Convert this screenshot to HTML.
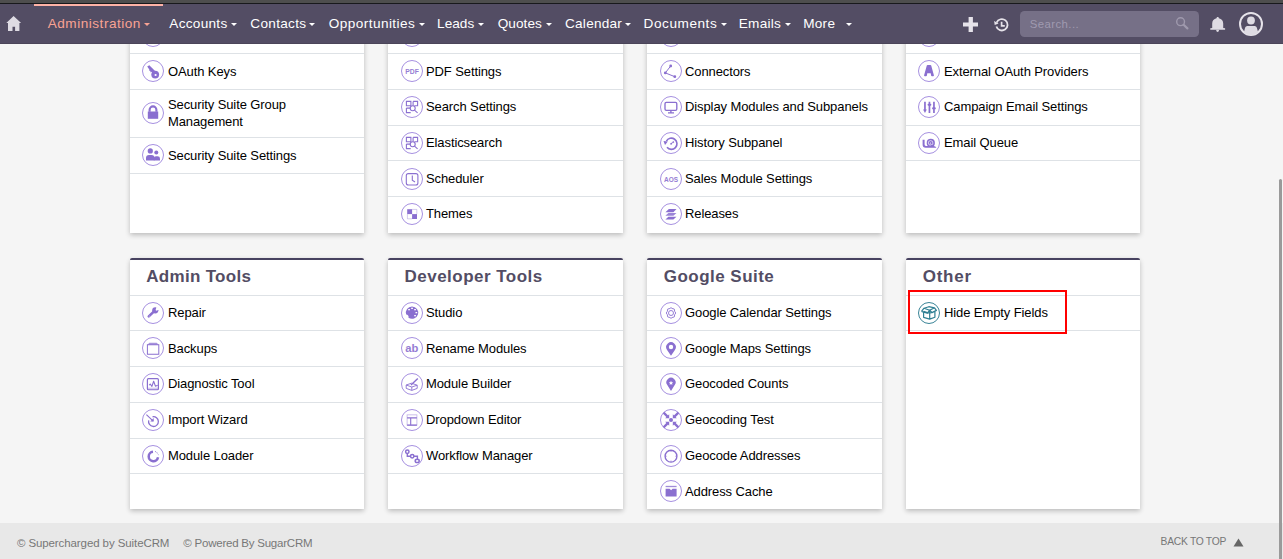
<!DOCTYPE html><html><head><meta charset="utf-8"><title>Administration</title><style>
html,body{margin:0;padding:0;width:1283px;height:559px;overflow:hidden;background:#f5f5f5;font-family:"Liberation Sans",sans-serif;}
.t{position:absolute;white-space:nowrap;line-height:0;height:0}
.nav{position:absolute;left:0;top:0;width:1283px;height:44px;background:#534d64;}
.strip{position:absolute;left:0;top:0;width:1283px;height:3px;background:#4e4e4e}
.strip2{position:absolute;left:0;top:3px;width:1283px;height:1px;background:#18191c}
.navline{position:absolute;left:0;top:43px;width:1283px;height:1px;background:#4b4559}
.panel{position:absolute;background:#fff;box-shadow:0 2px 5px rgba(0,0,0,.24);}
.hb{position:absolute;left:0;right:0;top:0;height:2px;background:#474260;border-radius:4px 4px 0 0}
.rb{position:absolute;left:0;right:0;height:1px;background:#dee2e6}
.ic{position:absolute;width:22px;height:22px}
.footer{position:absolute;left:0;top:523px;width:1283px;height:36px;background:#e8e8e8}
</style></head><body>

<div class="panel" style="left:130px;top:20px;width:234px;height:213px">
<div class="rb" style="top:33px"></div>
<div class="rb" style="top:69px"></div>
<div class="rb" style="top:117px"></div>
<div class="rb" style="top:153px"></div>
</div>
<div class="panel" style="left:388px;top:20px;width:235px;height:213px">
<div class="rb" style="top:33px"></div>
<div class="rb" style="top:69px"></div>
<div class="rb" style="top:105px"></div>
<div class="rb" style="top:140px"></div>
<div class="rb" style="top:176px"></div>
</div>
<div class="panel" style="left:647px;top:20px;width:235px;height:213px">
<div class="rb" style="top:33px"></div>
<div class="rb" style="top:69px"></div>
<div class="rb" style="top:105px"></div>
<div class="rb" style="top:140px"></div>
<div class="rb" style="top:176px"></div>
</div>
<div class="panel" style="left:906px;top:20px;width:234px;height:213px">
<div class="rb" style="top:33px"></div>
<div class="rb" style="top:69px"></div>
<div class="rb" style="top:105px"></div>
<div class="rb" style="top:140px"></div>
</div>
<div class="panel" style="left:130px;top:258px;width:234px;height:251px;border-radius:4px 4px 0 0"><div class="hb"></div>
<div class="rb" style="top:37px"></div>
<div class="rb" style="top:72px"></div>
<div class="rb" style="top:108px"></div>
<div class="rb" style="top:144px"></div>
<div class="rb" style="top:180px"></div>
<div class="rb" style="top:215px"></div>
</div>
<div class="panel" style="left:388px;top:258px;width:235px;height:251px;border-radius:4px 4px 0 0"><div class="hb"></div>
<div class="rb" style="top:37px"></div>
<div class="rb" style="top:72px"></div>
<div class="rb" style="top:108px"></div>
<div class="rb" style="top:144px"></div>
<div class="rb" style="top:180px"></div>
<div class="rb" style="top:215px"></div>
</div>
<div class="panel" style="left:647px;top:258px;width:235px;height:251px;border-radius:4px 4px 0 0"><div class="hb"></div>
<div class="rb" style="top:37px"></div>
<div class="rb" style="top:72px"></div>
<div class="rb" style="top:108px"></div>
<div class="rb" style="top:144px"></div>
<div class="rb" style="top:180px"></div>
<div class="rb" style="top:215px"></div>
</div>
<div class="panel" style="left:906px;top:258px;width:234px;height:251px;border-radius:4px 4px 0 0"><div class="hb"></div>
<div class="rb" style="top:37px"></div>
<div class="rb" style="top:72px"></div>
</div>
<div class="t" style="left:168px;top:71.50px;font-size:13px;color:#000;letter-spacing:-0.1px">OAuth Keys</div>
<svg class="ic" style="left:142px;top:60.0px" viewBox="0 0 22 22"><circle cx="11" cy="11" r="10.5" fill="none" stroke="#a690e0" stroke-width="1"/><circle cx="13.2" cy="14.6" r="3.9" fill="#8a6fd0"/><path d="M5.2 6.6 L7.3 5.2 L13.6 11.6 L11.4 13.8 L9.4 11.8 L8.6 12.4 L8.2 10.7 L7.4 10.9 L7.3 9.4 Z" fill="#8a6fd0"/><circle cx="13.6" cy="15" r="1.1" fill="#fff"/></svg>
<div class="t" style="left:168px;top:104.50px;font-size:13px;color:#000;letter-spacing:-0.1px">Security Suite Group</div>
<div class="t" style="left:168px;top:121.50px;font-size:13px;color:#000;letter-spacing:-0.1px">Management</div>
<svg class="ic" style="left:142px;top:102.0px" viewBox="0 0 22 22"><circle cx="11" cy="11" r="10.5" fill="none" stroke="#a690e0" stroke-width="1"/><path d="M7.6 9.8 V7.8 A3.4 3.4 0 0 1 14.4 7.8 V9.8" fill="none" stroke="#8a6fd0" stroke-width="2.1"/><rect x="5.8" y="9.5" width="10.4" height="7.3" fill="#8a6fd0"/></svg>
<div class="t" style="left:168px;top:155.50px;font-size:13px;color:#000;letter-spacing:-0.1px">Security Suite Settings</div>
<svg class="ic" style="left:142px;top:144.0px" viewBox="0 0 22 22"><circle cx="11" cy="11" r="10.5" fill="none" stroke="#a690e0" stroke-width="1"/><circle cx="8.3" cy="6.9" r="2.6" fill="#8a6fd0"/><circle cx="14.3" cy="8.6" r="2" fill="#8a6fd0"/><path d="M4 16.5 V14 Q4 11 7 11 H9.5 Q12.5 11 12.5 14 V16.5Z" fill="#8a6fd0"/><path d="M11.8 16.5 V14.2 Q11.8 12.2 14 12.2 H15.5 Q18 12.2 18 14.6 V16.5Z" fill="#8a6fd0"/></svg>
<div class="t" style="left:426px;top:71.50px;font-size:13px;color:#000;letter-spacing:-0.1px">PDF Settings</div>
<svg class="ic" style="left:401px;top:60.0px" viewBox="0 0 22 22"><circle cx="11" cy="11" r="10.5" fill="none" stroke="#a690e0" stroke-width="1"/><text x="11.1" y="14.1" font-family="Liberation Sans" font-weight="bold" font-size="6.9" text-anchor="middle" fill="#8a6fd0" opacity="0.9" textLength="13.6" lengthAdjust="spacingAndGlyphs">PDF</text></svg>
<div class="t" style="left:426px;top:106.50px;font-size:13px;color:#000;letter-spacing:-0.1px">Search Settings</div>
<svg class="ic" style="left:401px;top:96.0px" viewBox="0 0 22 22"><circle cx="11" cy="11" r="10.5" fill="none" stroke="#a690e0" stroke-width="1"/><path d="M5.4 5.4 H9.9 V9.7 H5.4Z M12.1 5.4 H16.6 V9.7 H13.4 M12.1 9.7 V5.4 M5.4 12.1 V16.6 H9.7 M5.4 12.1 H9.5" fill="none" stroke="#8a6fd0" stroke-width="1.1"/><circle cx="11.7" cy="12.3" r="2.5" fill="none" stroke="#8a6fd0" stroke-width="1.1"/><path d="M13.5 14.1 L16.6 16.9" fill="none" stroke="#8a6fd0" stroke-width="1.1"/></svg>
<div class="t" style="left:426px;top:142.50px;font-size:13px;color:#000;letter-spacing:-0.1px">Elasticsearch</div>
<svg class="ic" style="left:401px;top:132.0px" viewBox="0 0 22 22"><circle cx="11" cy="11" r="10.5" fill="none" stroke="#a690e0" stroke-width="1"/><path d="M5.4 5.4 H9.9 V9.7 H5.4Z M12.1 5.4 H16.6 V9.7 H13.4 M12.1 9.7 V5.4 M5.4 12.1 V16.6 H9.7 M5.4 12.1 H9.5" fill="none" stroke="#8a6fd0" stroke-width="1.1"/><circle cx="11.7" cy="12.3" r="2.5" fill="none" stroke="#8a6fd0" stroke-width="1.1"/><path d="M13.5 14.1 L16.6 16.9" fill="none" stroke="#8a6fd0" stroke-width="1.1"/></svg>
<div class="t" style="left:426px;top:178.50px;font-size:13px;color:#000;letter-spacing:-0.1px">Scheduler</div>
<svg class="ic" style="left:401px;top:167.5px" viewBox="0 0 22 22"><circle cx="11" cy="11" r="10.5" fill="none" stroke="#a690e0" stroke-width="1"/><rect x="5.3" y="5.6" width="11.6" height="11.4" rx="2" fill="none" stroke="#8a6fd0" stroke-width="1.1"/><path d="M11.3 7.6 V12.3 L14 14" fill="none" stroke="#8a6fd0" stroke-width="1.1"/></svg>
<div class="t" style="left:426px;top:213.50px;font-size:13px;color:#000;letter-spacing:-0.1px">Themes</div>
<svg class="ic" style="left:401px;top:203.0px" viewBox="0 0 22 22"><circle cx="11" cy="11" r="10.5" fill="none" stroke="#a690e0" stroke-width="1"/><rect x="6.2" y="6.2" width="4.9" height="4.9" fill="#8a6fd0"/><rect x="11.1" y="11.1" width="4.9" height="4.9" fill="#8a6fd0"/><path d="M11.1 6.4 H15.8 V11.1 M6.4 11.1 V15.8 H11.1" fill="none" stroke="#8a6fd0" stroke-width="0.6" opacity="0.6"/></svg>
<div class="t" style="left:685px;top:71.50px;font-size:13px;color:#000;letter-spacing:-0.1px">Connectors</div>
<svg class="ic" style="left:660px;top:60.0px" viewBox="0 0 22 22"><circle cx="11" cy="11" r="10.5" fill="none" stroke="#a690e0" stroke-width="1"/><path d="M10.7 6 L5.3 12.9 L14.8 16.7" fill="none" stroke="#8a6fd0" stroke-width="1"/><circle cx="10.7" cy="6" r="1.4" fill="#8a6fd0"/><circle cx="5.3" cy="12.9" r="1.4" fill="#8a6fd0"/><circle cx="14.8" cy="16.7" r="1.4" fill="#8a6fd0"/></svg>
<div class="t" style="left:685px;top:106.50px;font-size:13px;color:#000;letter-spacing:-0.1px">Display Modules and Subpanels</div>
<svg class="ic" style="left:660px;top:96.0px" viewBox="0 0 22 22"><circle cx="11" cy="11" r="10.5" fill="none" stroke="#a690e0" stroke-width="1"/><rect x="5" y="6.4" width="11.8" height="8" rx="1.3" fill="none" stroke="#8a6fd0" stroke-width="1.35"/><path d="M8 16.8 H14 M10.9 14.4 V16.8" fill="none" stroke="#8a6fd0" stroke-width="1.35"/></svg>
<div class="t" style="left:685px;top:142.50px;font-size:13px;color:#000;letter-spacing:-0.1px">History Subpanel</div>
<svg class="ic" style="left:660px;top:132.0px" viewBox="0 0 22 22"><circle cx="11" cy="11" r="10.5" fill="none" stroke="#a690e0" stroke-width="1"/><path d="M6.4 9.2 A5.6 5.6 0 1 1 7 15.3" fill="none" stroke="#8a6fd0" stroke-width="1.6"/><path d="M3.5 9 L7.8 9.4 L5 12.9Z" fill="#8a6fd0"/><path d="M10.5 12.3 L13.9 9.5" fill="none" stroke="#8a6fd0" stroke-width="1.5" stroke-dasharray="1.8 0.7"/></svg>
<div class="t" style="left:685px;top:178.50px;font-size:13px;color:#000;letter-spacing:-0.1px">Sales Module Settings</div>
<svg class="ic" style="left:660px;top:167.5px" viewBox="0 0 22 22"><circle cx="11" cy="11" r="10.5" fill="none" stroke="#a690e0" stroke-width="1"/><text x="11" y="14.25" font-family="Liberation Sans" font-weight="bold" font-size="6.9" text-anchor="middle" fill="#8a6fd0" opacity="0.9" textLength="14" lengthAdjust="spacingAndGlyphs">AOS</text></svg>
<div class="t" style="left:685px;top:213.50px;font-size:13px;color:#000;letter-spacing:-0.1px">Releases</div>
<svg class="ic" style="left:660px;top:203.0px" viewBox="0 0 22 22"><circle cx="11" cy="11" r="10.5" fill="none" stroke="#a690e0" stroke-width="1"/><path d="M8.9 6 H16.5 L13.4 9.2 H5.4Z" fill="#8a6fd0"/><path d="M8.4 10.1 H16.5 L13.4 12.8 H5.4Z" fill="#8a6fd0" opacity="0.85"/><path d="M8.4 13.7 H16.5 L13.4 16.5 H5.4Z" fill="#8a6fd0"/></svg>
<div class="t" style="left:944px;top:71.50px;font-size:13px;color:#000;letter-spacing:-0.1px">External OAuth Providers</div>
<svg class="ic" style="left:918px;top:60.0px" viewBox="0 0 22 22"><circle cx="11" cy="11" r="10.5" fill="none" stroke="#a690e0" stroke-width="1"/><path d="M9.6 5 H12.4 Q13 5 13.2 5.6 L15.9 15.2 Q16.1 16.2 15.1 16.2 H14 Q13.2 16.2 13.1 15.6 L12.7 13.3 H9.3 L8.9 15.6 Q8.8 16.2 8 16.2 H6.9 Q5.9 16.2 6.1 15.2 L8.8 5.6 Q9 5 9.6 5Z" fill="#8a6fd0"/></svg>
<div class="t" style="left:944px;top:106.50px;font-size:13px;color:#000;letter-spacing:-0.1px">Campaign Email Settings</div>
<svg class="ic" style="left:918px;top:96.0px" viewBox="0 0 22 22"><circle cx="11" cy="11" r="10.5" fill="none" stroke="#a690e0" stroke-width="1"/><path d="M6.95 5.65 V15 M11.45 5.65 V17.05 M15.95 5.65 V17.05" fill="none" stroke="#8a6fd0" stroke-width="1.7"/><path d="M5.1 13.6 H8.8 L6.95 16.9Z" fill="#8a6fd0"/><rect x="9.6" y="7.7" width="3.7" height="2" rx="0.9" fill="#8a6fd0"/><rect x="14.1" y="11.3" width="3.7" height="2" rx="0.9" fill="#8a6fd0"/></svg>
<div class="t" style="left:944px;top:142.50px;font-size:13px;color:#000;letter-spacing:-0.1px">Email Queue</div>
<svg class="ic" style="left:918px;top:132.0px" viewBox="0 0 22 22"><circle cx="11" cy="11" r="10.5" fill="none" stroke="#a690e0" stroke-width="1"/><circle cx="12.8" cy="10.9" r="4.1" fill="#8a6fd0"/><path d="M12.8 13.2 A2.3 2.3 0 1 1 14.9 11 A1.3 1.3 0 1 1 12.6 10.4" fill="none" stroke="#fff" stroke-width="0.8" opacity="0.8"/><path d="M4.6 7.8 V12.6 Q4.6 15.8 7.8 15.8 H18.4 Q17.6 14 15.6 14 H8 Q6.6 14 6.6 12.6 V7.8" fill="#8a6fd0"/></svg>
<div class="t" style="left:168px;top:312.50px;font-size:13px;color:#000;letter-spacing:-0.1px">Repair</div>
<svg class="ic" style="left:142px;top:301.5px" viewBox="0 0 22 22"><circle cx="11" cy="11" r="10.5" fill="none" stroke="#a690e0" stroke-width="1"/><path d="M6.8 14.4 L12 9.4" fill="none" stroke="#8a6fd0" stroke-width="2.6" stroke-linecap="round"/><circle cx="13.3" cy="8.3" r="3.1" fill="#8a6fd0"/><path d="M13.6 8.1 L14.6 4.6 L17.8 7.4 L14.2 8.8Z" fill="#fff"/><circle cx="7.3" cy="13.9" r="0.5" fill="#fff" opacity="0.6"/></svg>
<div class="t" style="left:168px;top:348.50px;font-size:13px;color:#000;letter-spacing:-0.1px">Backups</div>
<svg class="ic" style="left:142px;top:337.0px" viewBox="0 0 22 22"><circle cx="11" cy="11" r="10.5" fill="none" stroke="#a690e0" stroke-width="1"/><rect x="5.4" y="7.75" width="11.4" height="9.5" fill="none" stroke="#8a6fd0" stroke-width="1"/><path d="M7.4 5.65 H14.7 L16.8 7.75 H5.4Z" fill="#8a6fd0" opacity="0.75"/></svg>
<div class="t" style="left:168px;top:383.50px;font-size:13px;color:#000;letter-spacing:-0.1px">Diagnostic Tool</div>
<svg class="ic" style="left:142px;top:373.0px" viewBox="0 0 22 22"><circle cx="11" cy="11" r="10.5" fill="none" stroke="#a690e0" stroke-width="1"/><rect x="5.4" y="5.65" width="11" height="11.1" rx="1" fill="none" stroke="#8a6fd0" stroke-width="1.2"/><path d="M7.1 12.25 L8.2 11 L9.9 13.35 L11.65 8.2 L13.4 13.15 L15.7 12.25" fill="none" stroke="#8a6fd0" stroke-width="1.1" stroke-linejoin="round"/><rect x="5.4" y="14.6" width="11" height="2.1" fill="#8a6fd0" opacity="0.35"/></svg>
<div class="t" style="left:168px;top:419.50px;font-size:13px;color:#000;letter-spacing:-0.1px">Import Wizard</div>
<svg class="ic" style="left:142px;top:409.0px" viewBox="0 0 22 22"><circle cx="11" cy="11" r="10.5" fill="none" stroke="#a690e0" stroke-width="1"/><path d="M10.6 7.75 A4.9 4.9 0 1 1 6.7 11.45" fill="none" stroke="#8a6fd0" stroke-width="1.3"/><path d="M4.4 5.65 L11.2 12.1" fill="none" stroke="#8a6fd0" stroke-width="1.1"/><path d="M11.7 8.9 V12.5 H8.3Z" fill="#8a6fd0"/></svg>
<div class="t" style="left:168px;top:455.50px;font-size:13px;color:#000;letter-spacing:-0.1px">Module Loader</div>
<svg class="ic" style="left:142px;top:444.5px" viewBox="0 0 22 22"><circle cx="11" cy="11" r="10.5" fill="none" stroke="#a690e0" stroke-width="1"/><path d="M10.99 6.77 A4.7 4.7 0 1 0 16.03 12.27" fill="none" stroke="#8a6fd0" stroke-width="2.5"/><path d="M13.4 6.2 L13.9 7.2 M14.9 7.4 L15.3 8.3 M15.8 9.1 L16.5 9.7" fill="none" stroke="#8a6fd0" stroke-width="0.9"/></svg>
<div class="t" style="left:426px;top:312.50px;font-size:13px;color:#000;letter-spacing:-0.1px">Studio</div>
<svg class="ic" style="left:401px;top:301.5px" viewBox="0 0 22 22"><circle cx="11" cy="11" r="10.5" fill="none" stroke="#a690e0" stroke-width="1"/><path d="M11 4.4 A6.2 6.2 0 1 1 7.5 15.7 A2.4 2.4 0 0 0 5.2 12.6 A6.2 6.2 0 0 1 11 4.4Z" fill="#8a6fd0"/><g fill="#fff"><rect x="7.2" y="7" width="1.7" height="1.3"/><rect x="10.2" y="5.7" width="1.7" height="1.3"/><rect x="13.2" y="7" width="1.7" height="1.3"/><rect x="14.5" y="10" width="1.7" height="1.3"/><rect x="13.2" y="13" width="1.7" height="1.3"/></g></svg>
<div class="t" style="left:426px;top:348.50px;font-size:13px;color:#000;letter-spacing:-0.1px">Rename Modules</div>
<svg class="ic" style="left:401px;top:337.0px" viewBox="0 0 22 22"><circle cx="11" cy="11" r="10.5" fill="none" stroke="#a690e0" stroke-width="1"/><text x="10.9" y="15.1" font-family="Liberation Sans" font-weight="bold" font-size="11.2" text-anchor="middle" fill="#8a6fd0" opacity="0.9">ab</text></svg>
<div class="t" style="left:426px;top:383.50px;font-size:13px;color:#000;letter-spacing:-0.1px">Module Builder</div>
<svg class="ic" style="left:401px;top:373.0px" viewBox="0 0 22 22"><circle cx="11" cy="11" r="10.5" fill="none" stroke="#a690e0" stroke-width="1"/><path d="M5.2 12 L10.5 10.2 L16.2 12.2 V15.4 L10.8 17.4 L5.2 15.4Z M5.2 12 L10.8 14 L16.2 12.2 M10.8 14 V17.4" fill="none" stroke="#8a6fd0" stroke-width="0.9"/><path d="M10 12 L16.8 5.4" fill="none" stroke="#8a6fd0" stroke-width="1.4"/></svg>
<div class="t" style="left:426px;top:419.50px;font-size:13px;color:#000;letter-spacing:-0.1px">Dropdown Editor</div>
<svg class="ic" style="left:401px;top:409.0px" viewBox="0 0 22 22"><circle cx="11" cy="11" r="10.5" fill="none" stroke="#a690e0" stroke-width="1"/><rect x="6.1" y="5.85" width="9.8" height="10.3" fill="none" stroke="#8a6fd0" stroke-width="0.8" opacity="0.55"/><path d="M6.1 8.85 H15.9 M9.7 8.85 V16.15 M6.1 16.15 H15.9" fill="none" stroke="#8a6fd0" stroke-width="1.1"/></svg>
<div class="t" style="left:426px;top:455.50px;font-size:13px;color:#000;letter-spacing:-0.1px">Workflow Manager</div>
<svg class="ic" style="left:401px;top:444.5px" viewBox="0 0 22 22"><circle cx="11" cy="11" r="10.5" fill="none" stroke="#a690e0" stroke-width="1"/><path d="M6.3 8.5 V11.25 H9.4 M13 11.25 H16.4 V14.2" fill="none" stroke="#8a6fd0" stroke-width="1.4"/><circle cx="6.3" cy="6.75" r="1.7" fill="none" stroke="#8a6fd0" stroke-width="1.5"/><circle cx="11.2" cy="11.25" r="1.7" fill="none" stroke="#8a6fd0" stroke-width="1.5"/><ellipse cx="16.2" cy="15.95" rx="2" ry="1.6" fill="none" stroke="#8a6fd0" stroke-width="1.5"/></svg>
<div class="t" style="left:685px;top:312.50px;font-size:13px;color:#000;letter-spacing:-0.1px">Google Calendar Settings</div>
<svg class="ic" style="left:660px;top:301.5px" viewBox="0 0 22 22"><circle cx="11" cy="11" r="10.5" fill="none" stroke="#a690e0" stroke-width="1"/><path d="M11 5.6 Q12 6.8 13.2 6.7 Q14.6 6.6 14.4 8 Q14.4 9.6 15.8 11 Q14.4 12.4 14.4 14 Q14.6 15.4 13.2 15.3 Q12 15.2 11 16.4 Q10 15.2 8.8 15.3 Q7.4 15.4 7.6 14 Q7.6 12.4 6.2 11 Q7.6 9.6 7.6 8 Q7.4 6.6 8.8 6.7 Q10 6.8 11 5.6Z" fill="none" stroke="#8a6fd0" stroke-width="0.9"/><circle cx="11" cy="11" r="2.5" fill="none" stroke="#8a6fd0" stroke-width="0.9"/></svg>
<div class="t" style="left:685px;top:348.50px;font-size:13px;color:#000;letter-spacing:-0.1px">Google Maps Settings</div>
<svg class="ic" style="left:660px;top:337.0px" viewBox="0 0 22 22"><circle cx="11" cy="11" r="10.5" fill="none" stroke="#a690e0" stroke-width="1"/><path d="M11 18.8 L7.1 12.9 A4.8 4.8 0 1 1 14.9 12.9Z" fill="#8a6fd0"/><circle cx="11" cy="10" r="2.2" fill="#fff"/></svg>
<div class="t" style="left:685px;top:383.50px;font-size:13px;color:#000;letter-spacing:-0.1px">Geocoded Counts</div>
<svg class="ic" style="left:660px;top:373.0px" viewBox="0 0 22 22"><circle cx="11" cy="11" r="10.5" fill="none" stroke="#a690e0" stroke-width="1"/><path d="M11 17.9 L7.3 12.1 A4.6 4.6 0 1 1 14.7 12.1Z" fill="#8a6fd0"/><path d="M11 7.8 L11.65 9.3 L13.2 9.4 L12 10.4 L12.4 12 L11 11.1 L9.6 12 L10 10.4 L8.8 9.4 L10.35 9.3Z" fill="#fff"/></svg>
<div class="t" style="left:685px;top:419.50px;font-size:13px;color:#000;letter-spacing:-0.1px">Geocoding Test</div>
<svg class="ic" style="left:660px;top:409.0px" viewBox="0 0 22 22"><circle cx="11" cy="11" r="10.5" fill="none" stroke="#a690e0" stroke-width="1"/><circle cx="11" cy="11" r="2" fill="#8a6fd0"/><g transform="rotate(0 11 11)"><path d="M3.6 3.6 L7.6 7.6" fill="none" stroke="#8a6fd0" stroke-width="2.2"/><path d="M9.2 9.2 L9.2 5.2 L5.2 9.2Z" fill="#8a6fd0"/></g><g transform="rotate(90 11 11)"><path d="M3.6 3.6 L7.6 7.6" fill="none" stroke="#8a6fd0" stroke-width="2.2"/><path d="M9.2 9.2 L9.2 5.2 L5.2 9.2Z" fill="#8a6fd0"/></g><g transform="rotate(180 11 11)"><path d="M3.6 3.6 L7.6 7.6" fill="none" stroke="#8a6fd0" stroke-width="2.2"/><path d="M9.2 9.2 L9.2 5.2 L5.2 9.2Z" fill="#8a6fd0"/></g><g transform="rotate(270 11 11)"><path d="M3.6 3.6 L7.6 7.6" fill="none" stroke="#8a6fd0" stroke-width="2.2"/><path d="M9.2 9.2 L9.2 5.2 L5.2 9.2Z" fill="#8a6fd0"/></g></svg>
<div class="t" style="left:685px;top:455.50px;font-size:13px;color:#000;letter-spacing:-0.1px">Geocode Addresses</div>
<svg class="ic" style="left:660px;top:444.5px" viewBox="0 0 22 22"><circle cx="11" cy="11" r="10.5" fill="none" stroke="#a690e0" stroke-width="1"/><circle cx="11" cy="11.2" r="5.9" fill="none" stroke="#8a6fd0" stroke-width="1.4"/><path d="M11 5.6 V7 M11 15.4 V16.8 M5.4 11.2 H6.8 M15.2 11.2 H16.6" fill="none" stroke="#8a6fd0" stroke-width="1.1" opacity="0.6"/></svg>
<div class="t" style="left:685px;top:491.50px;font-size:13px;color:#000;letter-spacing:-0.1px">Address Cache</div>
<svg class="ic" style="left:660px;top:480.0px" viewBox="0 0 22 22"><circle cx="11" cy="11" r="10.5" fill="none" stroke="#a690e0" stroke-width="1"/><rect x="5.6" y="5.85" width="11" height="1.3" fill="#8a6fd0" opacity="0.8"/><path d="M5.6 8.65 H9.6 L11.1 10.2 L12.6 8.65 H16.6 V16.55 H5.6Z" fill="#8a6fd0"/></svg>
<div class="t" style="left:944px;top:312.50px;font-size:13px;color:#000;letter-spacing:-0.1px">Hide Empty Fields</div>
<svg class="ic" style="left:918px;top:301.5px" viewBox="0 0 22 22"><circle cx="11" cy="11" r="10.5" fill="none" stroke="#3a8497" stroke-width="1"/><path d="M5.6 9.3 V15.3 L11.7 17.1 L16.9 15.3 V9.3 M5.6 9.3 L11.7 11.2 L16.9 9.3 M11.7 11.2 V17.1 M3.5 9.4 L6 6.2 L10.8 4.7 L16.5 5.8 L18.4 8.4 L16.9 9.3 M6 6.2 L11.7 8.2 L16.5 5.8 M11.7 8.2 L11.7 11.2 M3.5 9.4 L5.6 10.2 M3.5 9.4 L9.2 11.3 L11.7 8.2 L14 10.6 L18.4 8.4" fill="none" stroke="#2f7f93" stroke-width="1.2" stroke-linejoin="round"/></svg>
<svg class="ic" style="left:142px;top:25px" viewBox="0 0 22 22"><circle cx="11" cy="11" r="10.5" fill="none" stroke="#a690e0" stroke-width="1"/></svg>
<svg class="ic" style="left:401px;top:25px" viewBox="0 0 22 22"><circle cx="11" cy="11" r="10.5" fill="none" stroke="#a690e0" stroke-width="1"/></svg>
<svg class="ic" style="left:660px;top:25px" viewBox="0 0 22 22"><circle cx="11" cy="11" r="10.5" fill="none" stroke="#a690e0" stroke-width="1"/></svg>
<svg class="ic" style="left:918px;top:25px" viewBox="0 0 22 22"><circle cx="11" cy="11" r="10.5" fill="none" stroke="#a690e0" stroke-width="1"/></svg>
<div class="nav"></div><div class="strip"></div><div class="strip2"></div><div class="navline"></div>
<div style="position:absolute;left:34px;top:4px;width:129px;height:2px;background:#ffb3a7"></div>
<div style="position:absolute;left:144px;top:23px;width:0;height:0;border-left:3px solid transparent;border-right:3px solid transparent;border-top:3px solid #f9a393"></div>
<div style="position:absolute;left:231px;top:23px;width:0;height:0;border-left:3px solid transparent;border-right:3px solid transparent;border-top:3px solid #ffffff"></div>
<div style="position:absolute;left:309px;top:23px;width:0;height:0;border-left:3px solid transparent;border-right:3px solid transparent;border-top:3px solid #ffffff"></div>
<div style="position:absolute;left:419px;top:23px;width:0;height:0;border-left:3px solid transparent;border-right:3px solid transparent;border-top:3px solid #ffffff"></div>
<div style="position:absolute;left:478px;top:23px;width:0;height:0;border-left:3px solid transparent;border-right:3px solid transparent;border-top:3px solid #ffffff"></div>
<div style="position:absolute;left:545.7px;top:23px;width:0;height:0;border-left:3px solid transparent;border-right:3px solid transparent;border-top:3px solid #ffffff"></div>
<div style="position:absolute;left:625px;top:23px;width:0;height:0;border-left:3px solid transparent;border-right:3px solid transparent;border-top:3px solid #ffffff"></div>
<div style="position:absolute;left:720.7px;top:23px;width:0;height:0;border-left:3px solid transparent;border-right:3px solid transparent;border-top:3px solid #ffffff"></div>
<div style="position:absolute;left:785.1px;top:23px;width:0;height:0;border-left:3px solid transparent;border-right:3px solid transparent;border-top:3px solid #ffffff"></div>
<div style="position:absolute;left:846px;top:23px;width:0;height:0;border-left:3px solid transparent;border-right:3px solid transparent;border-top:3px solid #ffffff"></div>
<div class="footer"></div>

<svg style="position:absolute;left:0;top:4px" width="30" height="40" viewBox="0 4 30 40"><path d="M13.6 15.9 L21.1 22.9 L19.4 22.9 L19.4 31.1 L15.1 31.1 L15.1 26.8 L12.5 26.8 L12.5 31.1 L8 31.1 L8 22.9 L6.3 22.9Z" fill="#dedbe3"/></svg>
<svg style="position:absolute;left:955px;top:4px" width="320" height="40" viewBox="955 4 320 40">
<path d="M963 22.6 H978 V26.4 H963Z M968.6 17 H972.9 V32 H968.6Z" fill="#e6e3ea"/>
<g transform="translate(990 13)"><path d="M6.6 9.6 A5.7 5.7 0 1 1 6.4 13.4" fill="none" stroke="#e6e3ea" stroke-width="1.8"/><path d="M4.1 8.1 L8.6 10.5 L4.7 11.9Z" fill="#e6e3ea"/><path d="M11.6 8.8 V12.9 H14.8" fill="none" stroke="#e6e3ea" stroke-width="1.7"/></g>
<rect x="1020" y="11" width="179" height="26" rx="4.5" fill="#767087"/>
<circle cx="1180.6" cy="21.7" r="3.9" fill="none" stroke="#9f99ad" stroke-width="1.4"/><path d="M1183.6 24.8 L1187.4 28.4" stroke="#9f99ad" stroke-width="2.2" stroke-linecap="round"/>
<g transform="translate(1206 12)"><path d="M11.7 4.9 C12.5 4.9 12.9 5.5 12.9 6.3 C15.5 6.9 17.2 8.8 17.2 11.5 L17.2 15.9 L19.1 16.3 L19.1 17.8 L4.3 17.8 L4.3 16.3 L6.2 15.9 L6.2 11.5 C6.2 8.8 7.9 6.9 10.5 6.3 C10.5 5.5 10.9 4.9 11.7 4.9Z" fill="#dedbe3"/><path d="M10.3 17.8 H12.9 V18.6 A1.3 1.3 0 0 1 10.3 18.6Z" fill="#dedbe3"/></g>
<g transform="translate(1237 10)"><defs><clipPath id="uc"><circle cx="14" cy="13.9" r="11"/></clipPath></defs><circle cx="14" cy="13.9" r="11" fill="none" stroke="#e6e3ea" stroke-width="2"/><circle cx="14" cy="10.5" r="3.9" fill="#dedbe3"/><path d="M10.4 16 H17.6 Q19.4 16 19.9 17.8 L22 26 H6 L8.1 17.8 Q8.6 16 10.4 16Z" fill="#dedbe3" clip-path="url(#uc)"/></g>
</svg>

<div class="t" style="left:47.70px;top:24.29px;font-size:13.6px;font-weight:normal;color:#f9a393;letter-spacing:0.508px">Administration</div>
<div class="t" style="left:169.30px;top:24.29px;font-size:13.6px;font-weight:normal;color:#ffffff;letter-spacing:0.286px">Accounts</div>
<div class="t" style="left:250.30px;top:24.29px;font-size:13.6px;font-weight:normal;color:#ffffff;letter-spacing:0.300px">Contacts</div>
<div class="t" style="left:328.70px;top:24.29px;font-size:13.6px;font-weight:normal;color:#ffffff;letter-spacing:0.442px">Opportunities</div>
<div class="t" style="left:437.10px;top:24.29px;font-size:13.6px;font-weight:normal;color:#ffffff;letter-spacing:0.025px">Leads</div>
<div class="t" style="left:497.70px;top:24.29px;font-size:13.6px;font-weight:normal;color:#ffffff;letter-spacing:0.080px">Quotes</div>
<div class="t" style="left:565.00px;top:24.29px;font-size:13.6px;font-weight:normal;color:#ffffff;letter-spacing:0.243px">Calendar</div>
<div class="t" style="left:643.60px;top:24.29px;font-size:13.6px;font-weight:normal;color:#ffffff;letter-spacing:0.550px">Documents</div>
<div class="t" style="left:738.80px;top:24.29px;font-size:13.6px;font-weight:normal;color:#ffffff;letter-spacing:0.260px">Emails</div>
<div class="t" style="left:803.20px;top:24.29px;font-size:13.6px;font-weight:normal;color:#ffffff;letter-spacing:0.267px">More</div>
<div class="t" style="left:146.30px;top:277.11px;font-size:17px;font-weight:bold;color:#534d64;letter-spacing:0.290px">Admin Tools</div>
<div class="t" style="left:404.60px;top:277.11px;font-size:17px;font-weight:bold;color:#534d64;letter-spacing:0.471px">Developer Tools</div>
<div class="t" style="left:663.70px;top:277.11px;font-size:17px;font-weight:bold;color:#534d64;letter-spacing:0.482px">Google Suite</div>
<div class="t" style="left:922.70px;top:277.11px;font-size:17px;font-weight:bold;color:#534d64;letter-spacing:0.775px">Other</div>
<div class="t" style="left:16.90px;top:543.02px;font-size:11.5px;font-weight:normal;color:#777777;letter-spacing:-0.092px">© Supercharged by SuiteCRM</div>
<div class="t" style="left:183.30px;top:543.02px;font-size:11.5px;font-weight:normal;color:#777777;letter-spacing:-0.225px">© Powered By SugarCRM</div>
<div class="t" style="left:1160.60px;top:542.43px;font-size:10.3px;font-weight:normal;color:#777777;letter-spacing:-0.280px">BACK TO TOP</div>
<div class="t" style="left:1029.80px;top:24.05px;font-size:11.4px;font-weight:normal;color:#a09ab0;letter-spacing:0.412px">Search...</div>
<svg style="position:absolute;left:1233px;top:538px" width="11" height="9" viewBox="0 0 11 9"><path d="M5.5 0.5 L10.5 8.5 L0.5 8.5Z" fill="#666"/></svg>
<div style="position:absolute;left:1279px;top:179px;width:3px;height:380px;background:#9a9a9a;border-radius:2px 2px 0 0"></div>
<div style="position:absolute;left:908px;top:290px;width:155px;height:40px;border:2px solid #ff0000"></div>
</body></html>
